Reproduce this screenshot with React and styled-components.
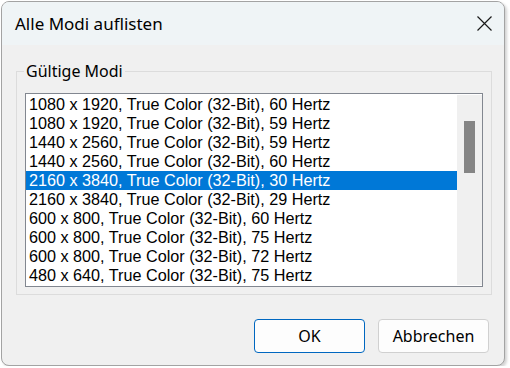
import styled, { createGlobalStyle } from "styled-components"

const GlobalStyle = createGlobalStyle`
    html, body {
        margin: 0;
        padding: 0;
        background: #ffffff;
    }
    * { box-sizing: border-box; }
`

const uiFont = `"Noto Sans", "Open Sans", sans-serif`
const listFont = `"Liberation Sans", Arial, sans-serif`

const modes = [
    "1080 x 1920, True Color (32-Bit), 60 Hertz",
    "1080 x 1920, True Color (32-Bit), 59 Hertz",
    "1440 x 2560, True Color (32-Bit), 59 Hertz",
    "1440 x 2560, True Color (32-Bit), 60 Hertz",
    "2160 x 3840, True Color (32-Bit), 30 Hertz",
    "2160 x 3840, True Color (32-Bit), 29 Hertz",
    "600 x 800, True Color (32-Bit), 60 Hertz",
    "600 x 800, True Color (32-Bit), 75 Hertz",
    "600 x 800, True Color (32-Bit), 72 Hertz",
    "480 x 640, True Color (32-Bit), 75 Hertz",
]

const StyledWindow = styled.div`
    margin: 1px 0 0 1px;
    width: 504px;
    height: 365px;
    border: 1px solid #a3a3a3;
    border-radius: 8px;
    background: #f0f0f0;
    box-shadow: 2px 2px 3px rgba(0,0,0,0.18);
    overflow: hidden;
    display: flex;
    flex-direction: column;
`

const StyledTitleBar = styled.div`
    height: 43px;
    flex: none;
    background: #eff4f6;
    display: flex;
    align-items: center;
    justify-content: space-between;
    padding: 0 11px 0 13px;
`

const StyledTitle = styled.span`
    font-family: ${uiFont};
    font-size: 17px;
    color: #000;
    margin-top: -1px;
`

const StyledClose = styled.svg`
    width: 17px;
    height: 17px;
    margin-top: -1px;
`

const StyledGroup = styled.fieldset`
    margin: 15px 12px 0 14px;
    padding: 11px 8px 7px 7px;
    border: 1px solid #dcdcdc;
    min-width: 0;
`

const StyledLegend = styled.legend`
    font-family: ${uiFont};
    font-size: 16px;
    line-height: 22px;
    padding: 0 2px;
    color: #000;
`

const StyledList = styled.div`
    height: 194px;
    border: 1px solid #828790;
    background: #fff;
    display: flex;
    margin-left: 1px;
`

const StyledRows = styled.div`
    flex: 1;
    padding-top: 1px;
    overflow: hidden;
`

const StyledRow = styled.div`
    height: 19px;
    line-height: 19px;
    padding-left: 3px;
    font-family: ${listFont};
    font-size: 16.2px;
    white-space: nowrap;
    color: ${props => props.$selected ? "#ffffff" : "#000000"};
    background: ${props => props.$selected ? "#0078d7" : "transparent"};
`

const StyledScrollbar = styled.div`
    width: 25px;
    flex: none;
    background: #f0f0f0;
    margin: 1px 0;
    padding: 26px 7px 0 7px;
`

const StyledThumb = styled.div`
    height: 52px;
    background: #858585;
`

const StyledButtons = styled.div`
    display: flex;
    justify-content: flex-end;
    gap: 13px;
    margin: 24px 15px 0 0;
`

const StyledButton = styled.button`
    width: 111px;
    height: 34px;
    border-radius: 4px;
    border: 1px solid ${props => props.$primary ? "#0067c0" : "#d0d0d0"};
    background: #fdfdfd;
    font-family: ${uiFont};
    font-size: 16px;
    color: #000;
    padding: 0;
`

function App(){
    return(
        <>
            <GlobalStyle/>
            <StyledWindow>
                <StyledTitleBar>
                    <StyledTitle>Alle Modi auflisten</StyledTitle>
                    <StyledClose viewBox="0 0 17 17">
                        <path d="M1.5 1.5 L15.5 15.5 M15.5 1.5 L1.5 15.5" stroke="#1a1a1a" strokeWidth="1.2" fill="none"/>
                    </StyledClose>
                </StyledTitleBar>
                <StyledGroup>
                    <StyledLegend>Gültige Modi</StyledLegend>
                    <StyledList>
                        <StyledRows>
                            {modes.map((m, i) => (
                                <StyledRow key={i} $selected={i === 4}>{m}</StyledRow>
                            ))}
                        </StyledRows>
                        <StyledScrollbar>
                            <StyledThumb/>
                        </StyledScrollbar>
                    </StyledList>
                </StyledGroup>
                <StyledButtons>
                    <StyledButton $primary>OK</StyledButton>
                    <StyledButton>Abbrechen</StyledButton>
                </StyledButtons>
            </StyledWindow>
        </>
    )
}

export default App
